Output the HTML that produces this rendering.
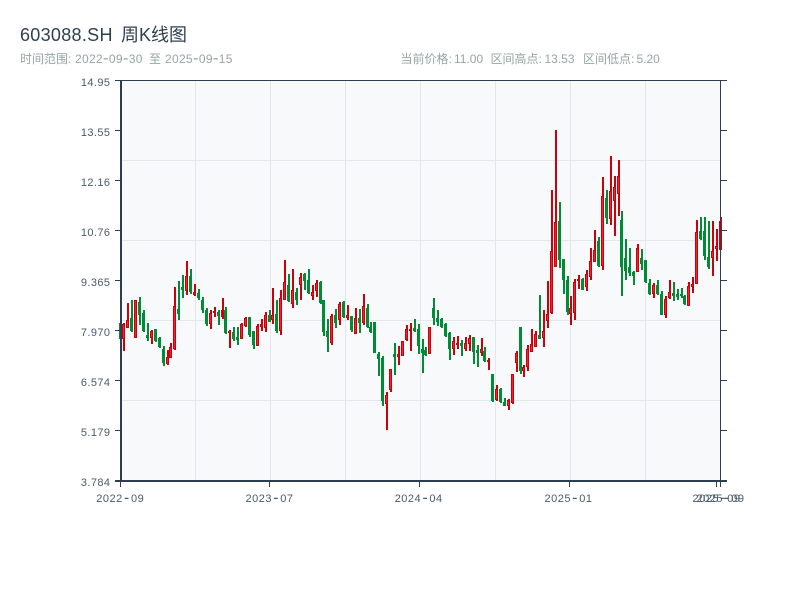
<!DOCTYPE html>
<html lang="zh">
<head>
<meta charset="utf-8">
<title>603088.SH 周K线图</title>
<style>
html,body{margin:0;padding:0;background:#fff;width:800px;height:600px;overflow:hidden}
svg{display:block}
text{font-family:"Liberation Sans","Noto Sans CJK SC",sans-serif}
.yl{font-size:11px;fill:#4a5a6a;text-anchor:end;letter-spacing:.4px}
.xl{font-size:11px;fill:#4a5a6a;letter-spacing:.5px}
.s{font-size:12px;fill:#95a5a6}
.n{letter-spacing:.3px}
.h{font-size:16px}
.h2{font-size:17px}
</style>
</head>
<body>
<svg width="800" height="600" viewBox="0 0 800 600" xmlns="http://www.w3.org/2000/svg">
<rect width="800" height="600" fill="#fff"/>
<text x="20" y="41" font-size="18" fill="#2f4052" letter-spacing=".3">603088.SH <tspan x="121" letter-spacing="0">周K线图</tspan></text>
<text class="s" x="20" y="63">时间范围: <tspan class="n" x="75">2022<tspan class="h2" dy=".4">-</tspan><tspan dy="-.4">09</tspan><tspan class="h2" dy=".4">-</tspan><tspan dy="-.4">30</tspan></tspan> <tspan x="149">至</tspan> <tspan class="n" x="165">2025<tspan class="h2" dy=".4">-</tspan><tspan dy="-.4">09</tspan><tspan class="h2" dy=".4">-</tspan><tspan dy="-.4">15</tspan></tspan></text>
<text class="s" x="400.500" y="63">当前价格: <tspan x="454">11.00</tspan></text>
<text class="s" x="490.500" y="63">区间高点: <tspan x="544.500">13.53</tspan></text>
<text class="s" x="583" y="63">区间低点: <tspan x="636.500">5.20</tspan></text>

<rect x="121" y="81" width="600" height="400" fill="#f8f9fb"/>
<path d="M195.5 81V481M270.5 81V481M345.5 81V481M420.5 81V481M495.5 81V481M570.5 81V481M645.5 81V481M121 160.5H720M121 240.5H720M121 320.5H720M121 400.5H720" stroke="#e3e6eb" stroke-width="1" fill="none"/>

<g fill="none">
<path stroke="#008c37" stroke-width="2" d="M121 323V339M132 300V332M140 297V325M144 310V332M148 323V341M156 329V342M160 337V348M164 346V366M179 281V320M183 275V298M191 269V294M199 289V300M203 297V313M207 308V326M219 310V325M226 307V334M234 327V341M238 327V345M250 317V337M254 331V349M270 310V322M277 300V333M289 274V302M297 288V305M305 273V290M309 269V294M321 281V304M324 300V336M328 319V352M336 309V328M344 301V318M352 316V332M360 309V333M368 304V328M371 322V333M375 322V353M379 352V376M383 356V406M395 343V375M415 319V332M419 324V354M423 339V373M426 347V356M434 298V325M438 310V326M442 318V328M446 323V337M450 332V360M462 340V356M474 337V364M478 345V367M485 347V362M493 374V402M501 388V403M505 398V406M521 327V374M540 295V339M560 202V268M564 259V294M568 276V315M583 278V290M599 237V267M607 190V224M622 211V296M626 239V280M630 248V276M634 271V285M642 249V270M646 260V283M650 279V295M658 280V295M662 291V315M674 282V301M678 289V300M682 288V298M685 295V305M701 217V240M705 217V260M709 221V269"/>
<path stroke="#008c37" stroke-width="3" d="M120.500 323V339M131.500 318V331M139.500 302V315M143.500 313V331M147.500 335V338M155.500 329V341M159.500 338V347M163.500 349V363M178.500 309V314M182.500 287V290M190.500 276V292M198.500 293V298M202.500 300V310M206.500 310V324M218.500 312V316M225.500 310V333M233.500 332V339M237.500 337V340M249.500 317V335M253.500 331V345M269.500 315V322M276.500 314V331M288.500 285V301M296.500 292V300M304.500 274V281M308.500 280V293M320.500 282V303M323.500 300V332M327.500 331V337M335.500 315V323M343.500 302V317M351.500 316V330M359.500 318V323M367.500 308V327M370.500 327V332M374.500 322V353M378.500 354V359M382.500 358V401M394.500 354V357M414.500 328V331M418.500 329V346M422.500 349V353M425.500 350V355M433.500 308V318M437.500 318V322M441.500 319V327M445.500 324V336M449.500 333V349M461.500 343V346M473.500 337V352M477.500 350V353M484.500 351V361M492.500 374V401M500.500 389V402M504.500 402V406M520.500 327V371M539.500 335V339M559.500 221V260M563.500 259V280M567.500 280V312M582.500 279V290M598.500 241V266M606.500 198V218M621.500 220V267M625.500 258V271M629.500 267V273M633.500 272V276M641.500 258V264M645.500 260V282M649.500 283V294M657.500 285V294M661.500 294V315M673.500 293V296M677.500 294V297M681.500 294V296M684.500 296V304M700.500 231V239M704.500 231V256M708.500 257V267"/>
<path stroke="#cc000a" stroke-width="2" d="M124 323V351M128 303V328M136 300V338M152 330V344M168 350V365M171 343V358M175 287V350M187 261V295M195 284V296M211 310V329M215 307V317M223 298V319M230 330V348M242 323V339M246 317V327M258 324V346M262 319V331M266 312V332M273 288V324M281 290V335M285 260V300M293 269V308M301 273V300M313 285V300M317 280V297M332 314V345M340 302V325M348 305V320M356 308V334M364 294V325M387 392V430M391 369V392M399 346V365M403 341V356M407 325V341M411 323V351M430 327V354M454 337V355M458 336V349M466 337V351M470 335V351M482 338V356M489 358V370M497 385V401M509 399V410M513 374V404M517 351V372M524 365V377M528 345V371M532 329V352M536 331V347M544 310V347M548 281V328M552 190V314M556 130V267M571 296V325M575 279V320M579 275V289M587 270V291M591 248V280M595 230V262M603 177V270M611 156V225M615 176V236M619 160V216M638 244V272M654 283V298M666 296V318M670 280V299M689 282V306M693 277V293M697 220V284M713 221V276M717 229V261M721 217V250"/>
<path stroke="#cc000a" stroke-width="3" d="M123.500 324V339M127.500 320V328M135.500 300V338M151.500 331V338M167.500 357V364M170.500 347V358M174.500 306V349M186.500 276V291M194.500 292V295M210.500 313V324M214.500 311V313M222.500 310V317M229.500 331V333M241.500 324V339M245.500 318V326M257.500 326V346M261.500 324V327M265.500 315V328M272.500 315V320M280.500 298V331M284.500 282V300M292.500 290V304M300.500 277V285M312.500 292V296M316.500 283V291M331.500 316V343M339.500 304V320M347.500 315V318M355.500 318V334M363.500 306V323M386.500 395V404M390.500 369V390M398.500 354V357M402.500 341V356M406.500 329V340M410.500 329V331M429.500 327V354M453.500 341V349M457.500 343V345M465.500 343V349M469.500 338V344M481.500 349V353M488.500 360V362M496.500 389V400M508.500 400V406M512.500 374V403M516.500 353V363M523.500 367V371M527.500 349V367M531.500 344V352M535.500 334V347M543.500 331V338M547.500 314V321M551.500 251V313M555.500 222V267M570.500 308V314M574.500 282V313M578.500 279V281M586.500 274V287M590.500 261V277M594.500 250V262M602.500 196V266M610.500 191V219M614.500 187V201M618.500 176V194M637.500 248V272M653.500 285V294M665.500 299V315M669.500 292V298M688.500 286V306M692.500 284V287M696.500 232V284M712.500 251V258M716.500 246V249M720.500 221V250"/>
<path stroke="#f0222c" stroke-width="1" d="M123.500 325V338M127.500 321V327M135.500 301V337M151.500 332V337M167.500 358V363M170.500 348V357M174.500 307V348M186.500 277V290M194.500 293V294M210.500 314V323M214.500 311.500V312.500M229.500 331.500V332.500M241.500 325V338M245.500 319V325M257.500 327V345M261.500 325V326M265.500 316V327M272.500 316V319M280.500 299V330M284.500 283V299M292.500 291V303M300.500 278V284M312.500 293V295M316.500 284V290M331.500 317V342M339.500 305V319M347.500 316V317M355.500 319V333M363.500 307V322M386.500 396V403M390.500 370V389M398.500 355V356M402.500 342V355M406.500 330V339M429.500 328V353M453.500 342V348M465.500 344V348M469.500 339V343M481.500 350V352M496.500 390V399M508.500 401V405M512.500 375V402M516.500 354V362M523.500 368V370M527.500 350V366M531.500 345V351M535.500 335V346M543.500 332V337M547.500 315V320M551.500 252V312M555.500 223V266M570.500 309V313M574.500 283V312M586.500 275V286M590.500 262V276M594.500 251V261M602.500 197V265M610.500 192V218M614.500 188V200M618.500 177V193M637.500 249V271M653.500 286V293M665.500 300V314M669.500 293V297M688.500 287V305M692.500 285V286M696.500 233V283M712.500 252V257M716.500 247V248"/>
</g>

<g stroke="#2c3e50" fill="none">
<path stroke-width="2" d="M121 80V482M115 481H727"/>
<path stroke-width="1" d="M115 80.500H727M720.500 80V482M115 130.500H121M115 180.500H121M115 230.500H121M115 280.500H121M115 330.500H121M115 380.500H121M115 430.500H121M721 130.500H727M721 180.500H727M721 230.500H727M721 280.500H727M721 330.500H727M721 380.500H727M721 430.500H727M120.500 481V487M269.500 481V487M419.500 481V487M569.500 481V487M716.500 481V487M720.500 481V487"/>
</g>

<text class="yl" x="110.400" y="86">14.95</text>
<text class="yl" x="110.400" y="136">13.55</text>
<text class="yl" x="110.400" y="186">12.16</text>
<text class="yl" x="110.400" y="236">10.76</text>
<text class="yl" x="110.400" y="286">9.365</text>
<text class="yl" x="110.400" y="336">7.970</text>
<text class="yl" x="110.400" y="386">6.574</text>
<text class="yl" x="110.400" y="436">5.179</text>
<text class="yl" x="110.400" y="486">3.784</text>

<text class="xl" x="96.300" y="502">2022<tspan class="h" dx="1.200" dy=".4">-</tspan><tspan dx="1.200" dy="-.4">09</tspan></text>
<text class="xl" x="245.500" y="502">2023<tspan class="h" dx="1.200" dy=".4">-</tspan><tspan dx="1.200" dy="-.4">07</tspan></text>
<text class="xl" x="394.700" y="502">2024<tspan class="h" dx="1.200" dy=".4">-</tspan><tspan dx="1.200" dy="-.4">04</tspan></text>
<text class="xl" x="544.500" y="502">2025<tspan class="h" dx="1.200" dy=".4">-</tspan><tspan dx="1.200" dy="-.4">01</tspan></text>
<text class="xl" x="692.500" y="502">2025<tspan class="h" dx="1.200" dy=".4">-</tspan><tspan dx="1.200" dy="-.4">09</tspan></text>
<text class="xl" x="696.500" y="502">2025<tspan class="h" dx="1.200" dy=".4">-</tspan><tspan dx="1.200" dy="-.4">09</tspan></text>
</svg>
</body>
</html>
